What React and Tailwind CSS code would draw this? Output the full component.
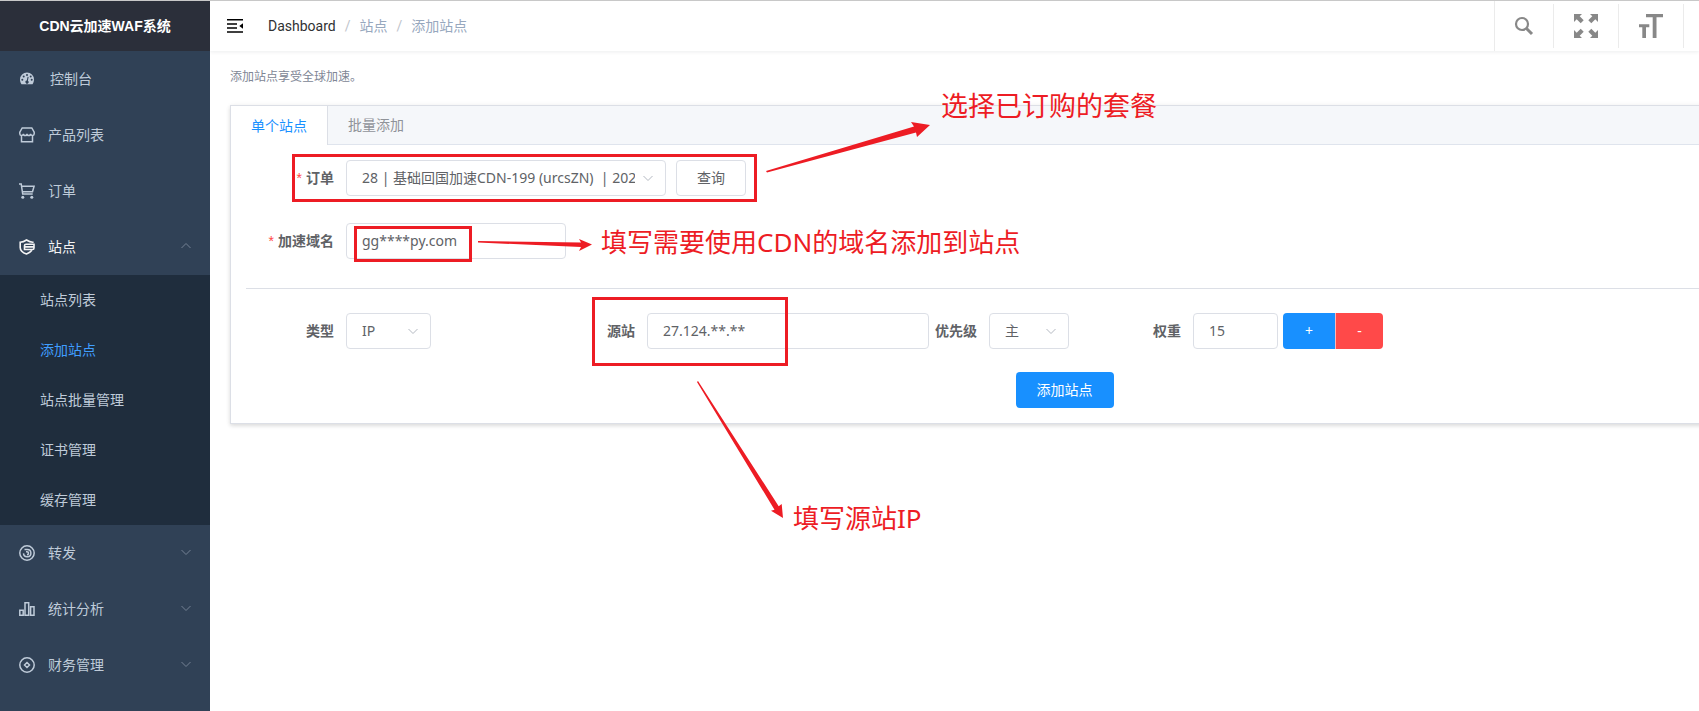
import React, { useState } from "react";

const DashboardIcon = () => (
  <svg className="h-4 w-4 shrink-0" viewBox="0 0 16 16" fill="none">
    <path
      fill="currentColor"
      fillRule="evenodd"
      d="M8 1.5a7 7 0 0 0-7 7c0 1.900.6 3.500 1.500 4.700h11c.9-1.200 1.500-2.800 1.500-4.700a7 7 0 0 0-7-7zM3.300 7.800a1 1 0 1 1 0 2 1 1 0 0 1 0-2zM4.700 4.400a1 1 0 1 1 0 2 1 1 0 0 1 0-2zM8 2.900a1 1 0 1 1 0 2 1 1 0 0 1 0-2zM11.700 4.600a1 1 0 1 1 0 2 1 1 0 0 1 0-2zM12.700 7.800a1 1 0 1 1 0 2 1 1 0 0 1 0-2zM8.600 5.800l1 .3-.7 3.600a1.600 1.600 0 1 1-1.100-.2z"
    />
  </svg>
);

const ShopIcon = () => (
  <svg className="h-4 w-4" viewBox="0 0 16 16" fill="none" stroke="currentColor" strokeWidth="1.5">
    <path d="M2.5 8v6.700h11V8M3.200 1h9.600l2.400 4.200v1.300a1.800 1.800 0 0 1-3.600.3 1.800 1.800 0 0 1-3.600 0 1.800 1.800 0 0 1-3.600 0A1.800 1.800 0 0 1 .8 6.500V5.200z" />
  </svg>
);

const CartIcon = () => (
  <svg className="h-4 w-4" viewBox="0 0 16 16" fill="none" stroke="currentColor" strokeWidth="1.5">
    <path d="M0 1h2.200L3.700 11h10M2.800 3.200h12.300l-1.600 5.600H3.500" />
    <circle cx="3.800" cy="14.300" r="1.500" fill="currentColor" stroke="none" />
    <circle cx="12.800" cy="14.300" r="1.500" fill="currentColor" stroke="none" />
  </svg>
);

const SiteIcon = () => (
  <svg className="h-4 w-4" viewBox="0 0 16 16" fill="none" stroke="currentColor" strokeWidth="1.6">
    <path d="M13.800 4V3.200C11.500 3.200 9.500 2.300 7.500 1 5.700 2.300 3.500 3.200 1.200 3.200v5.200c0 3.200 2.600 5.200 6.300 6.500 2.300-.9 4.300-2 5.400-3.600" />
    <path d="M15 5.300H7a1.500 1.500 0 0 0-1.500 1.500v3.700h8a1.500 1.500 0 0 0 1.500-1.500zM5.500 7.900H15" />
  </svg>
);

const ForwardIcon = () => (
  <svg className="h-4 w-4" viewBox="0 0 16 16" fill="none" stroke="currentColor" strokeWidth="1.5">
    <circle cx="8" cy="8" r="7.200" />
    <path d="M5.500 4.400H8.200a3.700 3.700 0 1 1-3.700 4M7 6.700h1a1.500 1.500 0 0 1 0 3" />
  </svg>
);

const StatsIcon = () => (
  <svg className="h-4 w-4" viewBox="0 0 16 16" fill="none" stroke="currentColor" strokeWidth="1.5">
    <path d="M.8 9.200h3.400v5.100H.8zM6 1.700h3.700v12.600H6zM11.600 5.700H15v8.600h-3.400z" />
  </svg>
);

const FinanceIcon = () => (
  <svg className="h-4 w-4" viewBox="0 0 16 16" fill="none" stroke="currentColor" strokeWidth="1.5">
    <circle cx="8" cy="8" r="7.200" />
    <path d="M8 5.500L10.500 8 8 10.500 5.500 8z" />
  </svg>
);

const Chevron = ({ up, className }) => (
  <svg className={className} viewBox="0 0 12 12" fill="none" stroke="currentColor">
    <path d={up ? "M1.5 8L6 3.500 10.500 8" : "M1.5 4L6 8.500 10.500 4"} />
  </svg>
);

const topMenu = [
  { label: "产品列表", icon: ShopIcon },
  { label: "订单", icon: CartIcon },
];

const siteMenu = ["站点列表", "添加站点", "站点批量管理", "证书管理", "缓存管理"];

const bottomMenu = [
  { label: "转发", icon: ForwardIcon },
  { label: "统计分析", icon: StatsIcon },
  { label: "财务管理", icon: FinanceIcon },
];

const Sidebar = () => {
  const [open, setOpen] = useState(true);
  const [active, setActive] = useState("添加站点");

  return (
    <aside className="w-[210px] shrink-0 bg-[#304156] text-sm text-[#bfcbd9]">
      <h1 className="flex h-[50px] items-center justify-center bg-[#2b2f3a] font-['Liberation_Sans','Noto_Sans_CJK_SC',sans-serif] font-bold text-white">
        CDN云加速WAF系统
      </h1>
      <nav>
        <a href="#dashboard" className="flex h-14 items-center gap-[15px] px-[19px]">
          <DashboardIcon />
          控制台
        </a>
        {topMenu.map(({ label, icon: Icon }) => (
          <a key={label} href="#menu" className="flex h-14 items-center gap-[13px] px-[19px]">
            <Icon />
            {label}
          </a>
        ))}

        {/* Site group */}
        <button
          onClick={() => setOpen(!open)}
          className="flex h-14 w-full items-center gap-[13px] pr-[18px] pl-[19px] text-[#f4f4f5]"
        >
          <SiteIcon />
          站点
          <Chevron up={open} className="mb-[3px] ml-auto h-3 w-3 text-[#748194]" />
        </button>
        {open && (
          <div className="bg-[#1f2d3d]">
            {siteMenu.map((label) => (
              <a
                key={label}
                href="#site"
                onClick={() => setActive(label)}
                className={`flex h-[50px] items-center pl-10 ${
                  active === label ? "text-[#409eff]" : ""
                }`}
              >
                {label}
              </a>
            ))}
          </div>
        )}

        {bottomMenu.map(({ label, icon: Icon }) => (
          <button
            key={label}
            className="flex h-14 w-full items-center gap-[13px] pr-[18px] pl-[19px]"
          >
            <Icon />
            {label}
            <Chevron className="mb-[3px] ml-auto h-3 w-3 text-[#748194]" />
          </button>
        ))}
      </nav>
    </aside>
  );
};

const Header = () => (
  <header className="flex h-[50px] items-center bg-white pl-4 shadow-[0_1px_4px_rgba(0,21,41,0.08)]">
    <button aria-label="Toggle sidebar" className="text-black">
      <svg className="h-[18px] w-[18px]" viewBox="0 0 18 18">
        <path
          fill="currentColor"
          d="M1 2h16v1.500H1zM1 6.300h10v1.500H1zM1 10.300h10v1.500H1zM1 14.300h16v1.500H1zM17 6.300v5.400L13.300 9z"
        />
      </svg>
    </button>
    <nav className="ml-6 flex gap-[9px] font-[Roboto,'Noto_Sans_CJK_SC',sans-serif] text-sm text-[#97a8be]">
      <a href="#home" className="text-[#303133]">
        Dashboard
      </a>
      <span className="text-[#c0c4cc]">/</span>
      <span>站点</span>
      <span className="text-[#c0c4cc]">/</span>
      <span>添加站点</span>
    </nav>

    <div className="ml-auto flex h-full items-center text-[#888]">
      <button
        aria-label="Search"
        className="flex h-full w-[59px] items-center justify-center border-l border-[#ebebeb]"
      >
        <svg className="h-5 w-5" viewBox="0 0 20 20" fill="none" stroke="currentColor">
          <circle cx="8" cy="8" r="6" strokeWidth="2.2" />
          <path d="M12.500 12.500l5.500 5.500" strokeWidth="3" />
        </svg>
      </button>
      <button
        aria-label="Fullscreen"
        className="flex h-11 w-[65px] items-center justify-center border-l border-[#ebebeb]"
      >
        <svg className="h-6 w-6" viewBox="0 0 24 24" fill="currentColor">
          <path d="M0 0h8L5.700 2.300l4 4-3 3-4-4L0 8zM24 0v8l-2.700-2.700-4 4-3-3 4-4L16 0zM0 24v-8l2.700 2.700 4-4 3 3-4 4L8 24zM24 24h-8l2.300-2.300-4-4 3-3 4 4L24 16z" />
        </svg>
      </button>
      <button
        aria-label="Size"
        className="flex h-11 w-[65px] items-center justify-center border-l border-[#ebebeb]"
      >
        <svg className="h-6 w-6" viewBox="0 0 24 24" fill="currentColor">
          <path d="M7 0h17v3.200h-6.500V24h-3.800V3.200H7zM0 10.300h10.300v3H7V24H3.300V13.300H0z" />
        </svg>
      </button>
      <div className="h-11 w-4 border-l border-[#ebebeb]" />
    </div>
  </header>
);

const Label = ({ htmlFor, required, className, children }) => (
  <label htmlFor={htmlFor} className={`shrink-0 pr-3 text-right font-bold ${className}`}>
    {required && (
      <span className="mr-1 font-['Liberation_Sans',sans-serif] font-normal text-[#ff4949]">*</span>
    )}
    {children}
  </label>
);

const Select = ({ id, options, className }) => (
  <div className={`relative shrink-0 ${className}`}>
    <select
      id={id}
      className="h-9 w-full appearance-none rounded border border-[#dcdfe6] bg-white pr-[30px] pb-px pl-[15px]"
    >
      {options.map((option) => (
        <option key={option}>{option}</option>
      ))}
    </select>
    <Chevron className="pointer-events-none absolute top-3 right-3 h-3 w-3 text-[#b4b9c2]" />
  </div>
);

const Input = ({ id, value, className }) => (
  <input
    id={id}
    defaultValue={value}
    className={`h-9 shrink-0 rounded border border-[#dcdfe6] bg-white px-[15px] pb-0.5 ${className}`}
  />
);

const SiteForm = () => (
  <form className="p-[15px] text-sm text-[#606266]" onSubmit={(e) => e.preventDefault()}>
    <div className="flex items-center">
      <Label htmlFor="order" required className="w-[100px]">订单</Label>
      <Select
        id="order"
        className="w-80"
        options={["28 | 基础回国加速CDN-199 (urcsZN)\u00a0 | 2023-01-01"]}
      />
      <button type="button" className="ml-[10px] h-9 w-[70px] rounded border border-[#dcdfe6]">
        查询
      </button>
    </div>

    <div className="mt-[27px] flex items-center">
      <Label htmlFor="domain" required className="w-[100px]">加速域名</Label>
      <Input id="domain" value="gg****py.com" className="w-[220px]" />
    </div>

    <hr className="mt-[29px] mb-6 border-[#dcdfe6]" />

    {/* Origin row */}
    <div className="flex items-center">
      <Label htmlFor="type" className="w-[100px]">类型</Label>
      <Select id="type" className="w-[85px]" options={["IP", "域名"]} />
      <Label htmlFor="origin" className="ml-[116px] w-[100px]">源站</Label>
      <Input id="origin" value="27.124.**.**" className="w-[282px]" />
      <Label htmlFor="priority" className="w-[60px]">优先级</Label>
      <Select id="priority" className="w-20" options={["主", "备"]} />
      <Label htmlFor="weight" className="ml-16 w-[60px]">权重</Label>
      <Input id="weight" value="15" className="w-[85px]" />
      <button type="button" className="ml-[5px] h-9 w-[52px] rounded-l bg-[#1890ff] text-white">
        +
      </button>
      <button
        type="button"
        className="h-9 w-12 rounded-r border-l border-[#ffb6b6] bg-[#ff4949] text-white"
      >
        -
      </button>
    </div>

    <div className="mt-[23px] flex justify-center">
      <button className="h-9 rounded bg-[#1890ff] px-[21px] text-white">添加站点</button>
    </div>
  </form>
);

// Red callouts that explain the form
const Annotations = () => (
  <div className="pointer-events-none absolute inset-x-0 -top-px bottom-0 overflow-hidden whitespace-nowrap text-[#ed1c24]">
    <div className="absolute top-[154px] left-[292px] h-12 w-[465px] border-3" />
    <div className="absolute top-[226px] left-[354px] h-9 w-[118px] border-3" />
    <div className="absolute top-[297px] left-[592px] h-[69px] w-[196px] border-3" />
    <svg className="absolute top-0 left-0 h-[540px] w-[960px]" viewBox="0 0 960 540" fill="currentColor">
      <path d="M766 171L914 126.500 911 122 930 125 917 137 916 132.500 767 172.500z" />
      <path d="M478 241L581 242.500 579 239 592 244.500 579 251 581 247 478 242.500z" />
      <path d="M697 382L774.500 509.700 771 510.700 783 518 781.700 504 778.700 506.300 698 381z" />
    </svg>
    <p className="absolute top-[86px] left-[941px] text-[27px] leading-10">选择已订购的套餐</p>
    <p className="absolute top-[222px] left-[601px] text-[26px] leading-10">
      填写需要使用CDN的域名添加到站点
    </p>
    <p className="absolute top-[498px] left-[793px] text-[26px] leading-10">填写源站IP</p>
  </div>
);

const App = () => {
  const [tab, setTab] = useState("单个站点");

  return (
    <div className="relative flex min-h-screen border-t border-[#c8c8c8] bg-white font-['Noto_Sans','Noto_Sans_CJK_SC',sans-serif]">
      <Sidebar />
      <div className="min-w-0 flex-1 overflow-hidden">
        <Header />
        <main className="pt-4 pl-5">
          <p className="text-xs leading-5 text-[#808695]">添加站点享受全球加速。</p>
          {/* The card runs past the right edge of the window */}
          <section className="mt-[18px] -mr-[200px] border border-[#dcdfe6] bg-white shadow-[0_2px_4px_rgba(0,0,0,0.12),0_0_6px_rgba(0,0,0,0.04)]">
            <div role="tablist" className="flex h-[39px] border-b border-[#dfe4ed] bg-[#f5f7fa] text-sm">
              {["单个站点", "批量添加"].map((label) => (
                <button
                  key={label}
                  role="tab"
                  aria-selected={tab === label}
                  onClick={() => setTab(label)}
                  className={
                    tab === label
                      ? "-mb-px border-r border-[#dcdfe6] bg-white px-5 text-[#1890ff]"
                      : "px-5 text-[#909399]"
                  }
                >
                  {label}
                </button>
              ))}
            </div>
            <SiteForm />
          </section>
        </main>
      </div>
      <Annotations />
    </div>
  );
};

export default App;
